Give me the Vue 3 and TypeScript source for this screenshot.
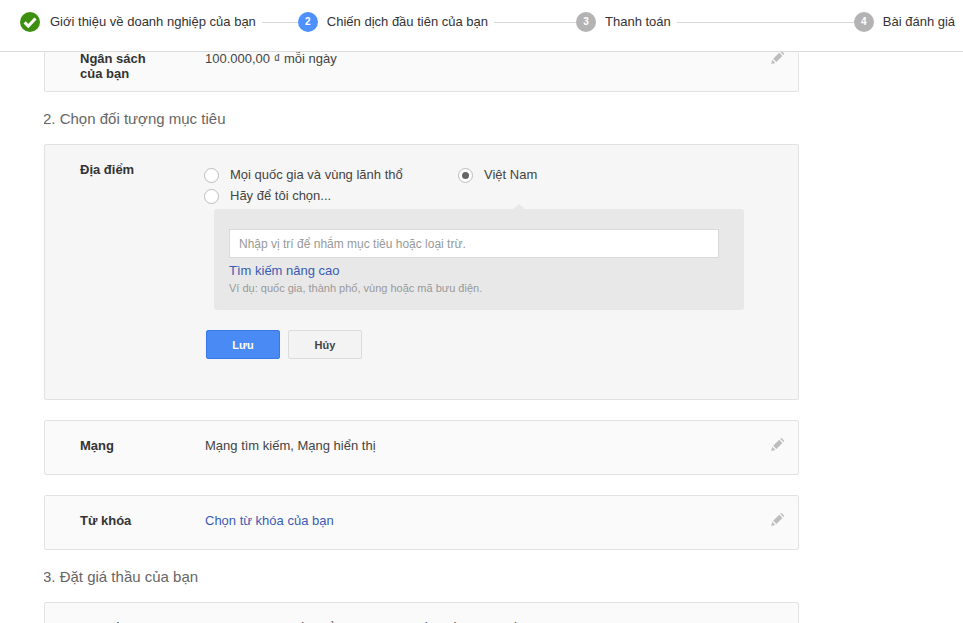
<script setup lang="ts">
interface Step { label: string; num: number; state: 'done' | 'active' | 'todo'; line: number }
const steps: Step[] = [
  { label: 'Giới thiệu về doanh nghiệp của bạn', num: 1, state: 'done', line: 36 },
  { label: 'Chiến dịch đầu tiên của bạn', num: 2, state: 'active', line: 82 },
  { label: 'Thanh toán', num: 3, state: 'todo', line: 177 },
  { label: 'Bài đánh giá', num: 4, state: 'todo', line: 0 },
]
const pencil = 'M0.2 13l1-4.2 3.2 3.2zM2.2 7.8l6-6 3.2 3.2-6 6zM9.2 0.8l0.6-0.6q0.5-0.4 1 0l2.2 2.2q0.4 0.5 0 1l-0.6 0.6z'
</script>

<template>
  <div class="page">
    <header class="steps">
      <template v-for="s in steps" :key="s.num">
        <svg v-if="s.state === 'done'" class="check" width="20" height="20" viewBox="0 0 20 20">
          <circle cx="10" cy="10" r="10" fill="#3d8f0f" />
          <path d="M4.6 10.4l3.7 3.7 7.2-7.6" fill="none" stroke="#fff" stroke-width="3" />
        </svg>
        <span v-else class="num" :class="s.state">{{ s.num }}</span>
        <span class="step-label">{{ s.label }}</span>
        <span v-if="s.line" class="line" :style="{ width: s.line + 'px' }"></span>
      </template>
    </header>

    <main class="main">
      <section class="card first">
        <div class="label">Ngân sách<br />của bạn</div>
        <div class="value">100.000,00 ₫ mỗi ngày</div>
        <svg class="pencil" width="14" height="14" viewBox="0 0 14 14"><path :d="pencil" fill="#bdbdbd" /></svg>
      </section>

      <h2 class="heading h-two">2. Chọn đối tượng mục tiêu</h2>

      <section class="card open">
        <div class="label loc">Địa điểm</div>
        <div class="editor">
          <div class="radio-row">
            <label class="radio wide"><span class="dot"></span>Mọi quốc gia và vùng lãnh thổ</label>
            <label class="radio"><span class="dot on"></span>Việt Nam</label>
          </div>
          <label class="radio"><span class="dot"></span>Hãy để tôi chọn...</label>
          <div class="panel">
            <span class="notch"></span>
            <div class="input">Nhập vị trí để nhắm mục tiêu hoặc loại trừ.</div>
            <a class="link adv">Tìm kiếm nâng cao</a>
            <p class="hint">Ví dụ: quốc gia, thành phố, vùng hoặc mã bưu điện.</p>
          </div>
          <div class="buttons">
            <button class="btn save">Lưu</button>
            <button class="btn cancel">Hủy</button>
          </div>
        </div>
      </section>

      <section class="card row">
        <div class="label">Mạng</div>
        <div class="value">Mạng tìm kiếm, Mạng hiển thị</div>
        <svg class="pencil" width="14" height="14" viewBox="0 0 14 14"><path :d="pencil" fill="#bdbdbd" /></svg>
      </section>

      <section class="card row">
        <div class="label">Từ khóa</div>
        <a class="value link">Chọn từ khóa của bạn</a>
        <svg class="pencil" width="14" height="14" viewBox="0 0 14 14"><path :d="pencil" fill="#bdbdbd" /></svg>
      </section>

      <h2 class="heading h-three">3. Đặt giá thầu của bạn</h2>

      <section class="card last">
        <div class="label">Giá thầu</div>
        <div class="value">Bạn tự đặt giá thầu để có được lượt tốt nhất với giá tốt</div>
      </section>
    </main>
  </div>
</template>

<style>
html, body { margin: 0; background: #fff; overflow: hidden; }
</style>

<style scoped>
.page {
  width: 963px;
  height: 623px;
  overflow: hidden;
  font-family: Arial, "Liberation Sans", sans-serif;
  font-size: 13px;
  color: #333;
  background: #fff;
}
.steps {
  height: 44px;
  border-bottom: 1px solid #dcdcdc;
  display: flex;
  align-items: center;
  padding-left: 20px;
  padding-bottom: 7px;
  white-space: nowrap;
}
.check { flex: none; margin-right: 10px; }
.num {
  flex: none;
  width: 20px;
  height: 20px;
  border-radius: 50%;
  color: #fff;
  font-size: 10px;
  font-weight: 700;
  line-height: 20px;
  text-align: center;
  margin-right: 9px;
}
.num.active { background: #4d90fe; }
.num.todo { background: #b3b3b3; }
.step-label { font-size: 13px; color: #333; margin-bottom: 2px; }
.line {
  flex: none;
  height: 1px;
  background: #d9d9d9;
  margin-left: 6px;
}
.main {
  width: 755px;
  margin-left: 44px;
  height: 571px;
  overflow: hidden;
}
.card {
  box-sizing: border-box;
  border: 1px solid #e2e2e2;
  border-radius: 2px;
  background: #fafafa;
  display: flex;
  position: relative;
}
.label {
  width: 125px;
  margin-left: 35px;
  flex: none;
  font-weight: 700;
  color: #333;
  line-height: 15px;
}
.value { color: #444; line-height: 15px; }
.link { color: #3a5bb5; }
.pencil { position: absolute; right: 13px; top: 17px; }
.first {
  height: 40px;
  border-top: none;
}
.first .label { margin-top: -1px; }
.first .value { margin-top: -1px; }
.first .pencil { top: -1px; }
.heading {
  margin: 0 0 0 -1px;
  font-size: 15px;
  font-weight: 400;
  color: #666;
  line-height: 20px;
}
.h-two { padding: 17px 0 15px; }
.h-three { padding: 17px 0 15px; }
.open {
  height: 256px;
  background: #f6f6f6;
  padding-top: 17px;
}
.editor { flex: none; margin-left: -1px; width: 540px; }
.radio-row { display: flex; margin-top: 2px; }
.radio {
  display: flex;
  align-items: center;
  height: 21px;
  color: #444;
  line-height: 21px;
}
.wide { width: 254px; }
.dot {
  box-sizing: border-box;
  width: 15px;
  height: 15px;
  border: 1px solid #bdbdbd;
  border-radius: 50%;
  background: #fff;
  margin-right: 11px;
  flex: none;
  position: relative;
  top: 1px;
}
.dot.on::after {
  content: "";
  position: absolute;
  left: 3px;
  top: 3px;
  width: 7px;
  height: 7px;
  border-radius: 50%;
  background: #666;
}
.panel {
  position: relative;
  box-sizing: border-box;
  width: 530px;
  height: 101px;
  margin: 3px 0 0 10px;
  padding: 20px 15px 0;
  background: #e8e8e8;
  border-radius: 3px;
}
.notch {
  position: absolute;
  left: 299px;
  top: -5px;
  border-left: 6px solid transparent;
  border-right: 6px solid transparent;
  border-bottom: 5px solid #e8e8e8;
}
.input {
  box-sizing: border-box;
  width: 490px;
  height: 29px;
  border: 1px solid #d9d9d9;
  background: #fff;
  color: #999;
  font-size: 12px;
  line-height: 29px;
  padding-left: 9px;
}
.adv { display: block; margin-top: 5px; line-height: 15px; }
.hint { margin: 3px 0 0; font-size: 11px; color: #999; line-height: 14px; }
.buttons { display: flex; gap: 8px; margin-top: 20px; margin-left: 2px; }
.btn {
  box-sizing: border-box;
  width: 74px;
  height: 29px;
  border-radius: 2px;
  font-family: inherit;
  font-size: 11px;
  font-weight: 700;
  padding: 0;
}
.save { background: #4a8af4; border: 1px solid #3b78e7; color: #fff; }
.cancel { background: #f3f3f3; border: 1px solid #dcdcdc; color: #444; }
.row {
  height: 55px;
  margin-top: 20px;
  padding-bottom: 4px;
  align-items: center;
}
.last {
  height: 60px;
  padding-top: 17px;
}
</style>
